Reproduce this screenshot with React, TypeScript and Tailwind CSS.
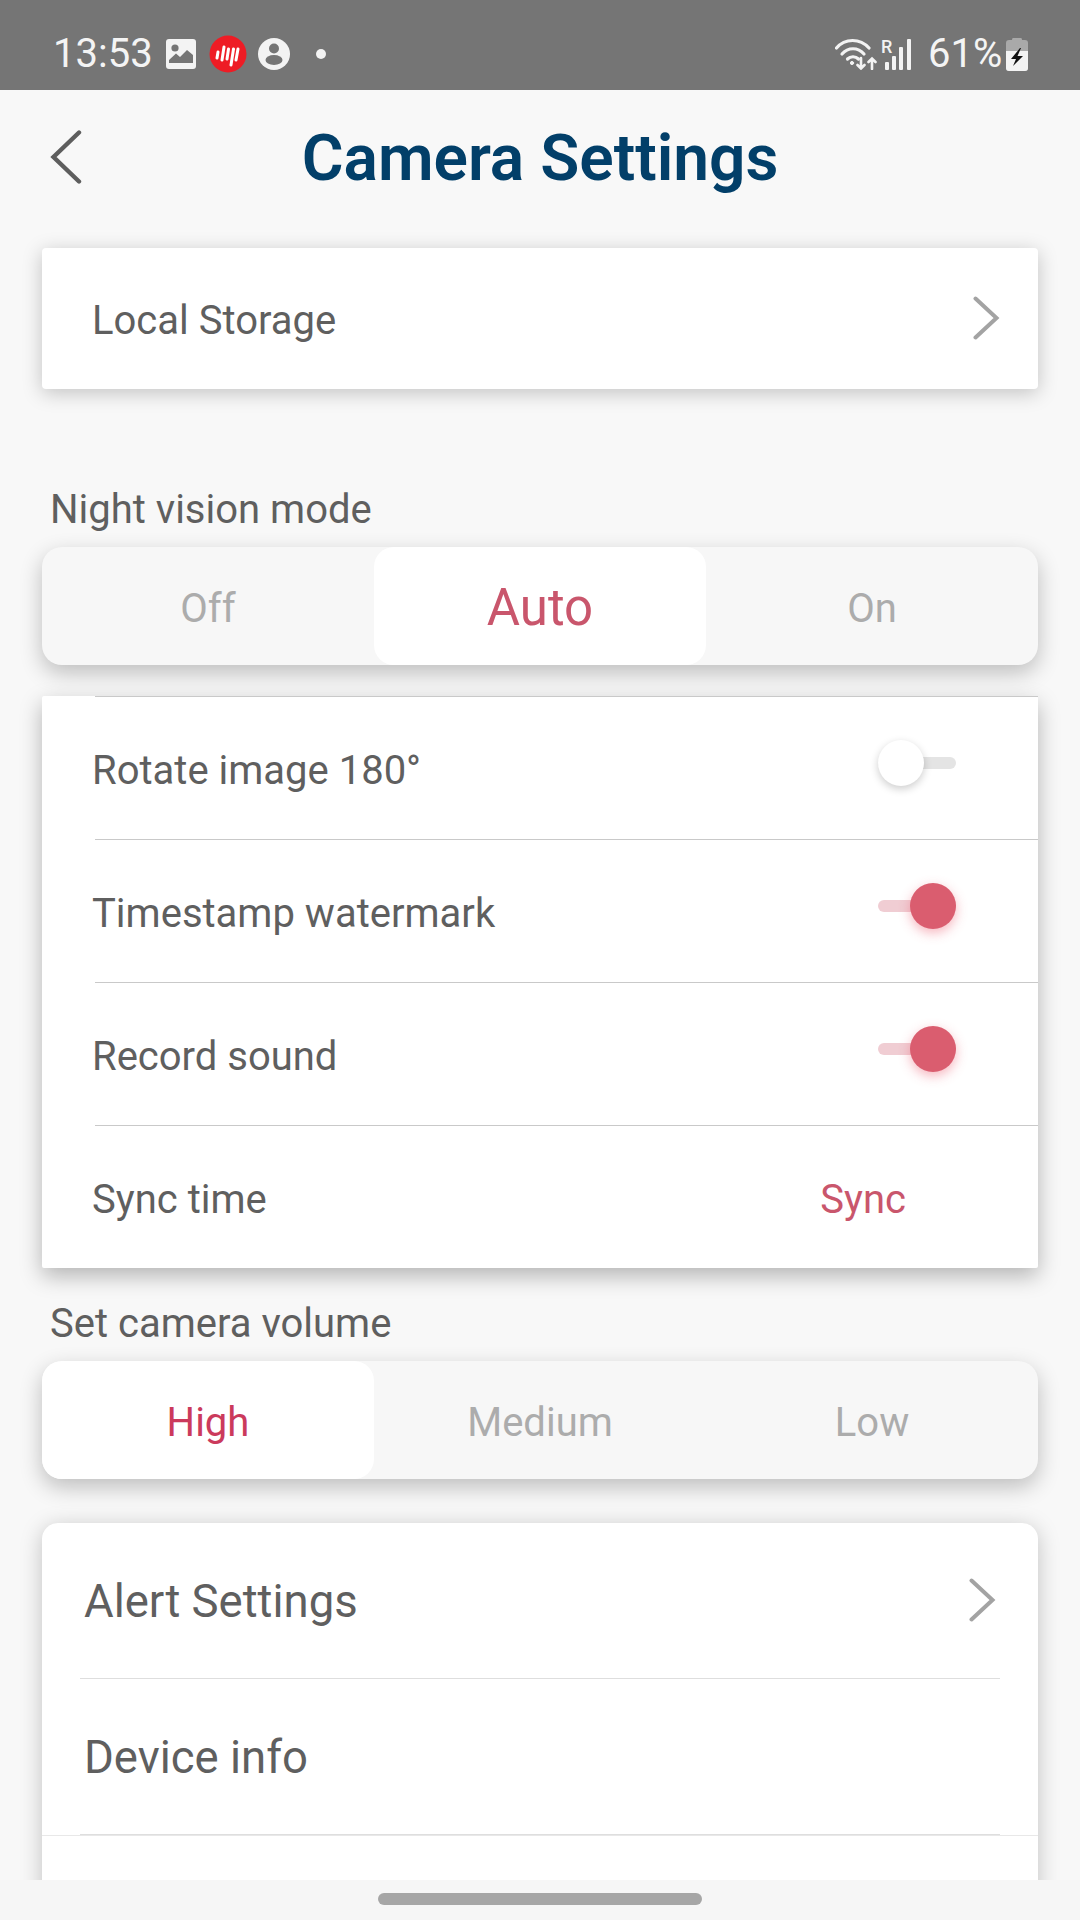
import React from "react";

const font = { fontFamily: "Roboto, sans-serif" };

function Chevron({ cls }: { cls: string }) {
  return (
    <svg className={cls} viewBox="0 0 27 44" fill="none">
      <path d="M2.5 2.5 L23.5 22 L2.5 41.5" stroke="#a3a3a3" strokeWidth="4" strokeLinecap="round" strokeLinejoin="miter" />
    </svg>
  );
}

function Toggle({ on }: { on: boolean }) {
  return (
    <div className="relative w-[78px] h-[46px] mt-[-10px]">
      <div className={`absolute left-0 top-[17px] w-[78px] h-[12px] rounded-full ${on ? "bg-[#f0cdd3]" : "bg-[#e4e4e4]"}`} />
      {on ? (
        <div className="absolute left-[32px] top-0 w-[46px] h-[46px] rounded-full bg-[#da5d6f] shadow-[0_4px_12px_rgba(235,90,110,0.45)]" />
      ) : (
        <div className="absolute left-0 top-0 w-[46px] h-[46px] rounded-full bg-white shadow-[0_3px_9px_rgba(0,0,0,0.2)]" />
      )}
    </div>
  );
}

function Segment({ items, active, activeCls }: { items: string[]; active: number; activeCls: string }) {
  return (
    <div className="mx-[42px] h-[118px] flex rounded-[20px] bg-[#f7f7f7] shadow-[0_8px_22px_rgba(0,0,0,0.24)]">
      {items.map((t, i) => (
        <div
          key={t}
          className={`flex-1 flex items-center justify-center rounded-[20px] pt-[5px] ${i === active ? "bg-white " + activeCls : "text-[40px] text-[#acacac]"}`}
        >
          {t}
        </div>
      ))}
    </div>
  );
}

function Divider() {
  return <div className="ml-[53px] h-px bg-[#c9c9c9]" />;
}

function Row({ label, children }: { label: string; children: React.ReactNode }) {
  return (
    <div className="h-[142px] flex items-center justify-between pl-[50px] text-[40px] text-[#5f5f5f]">
      <span className="pt-[5px]">{label}</span>
      {children}
    </div>
  );
}

export default function App() {
  return (
    <div className="w-[1080px] h-[1920px] flex flex-col overflow-hidden bg-[#f8f8f8]" style={font}>
      {/* status bar */}
      <div className="h-[90px] shrink-0 bg-[#757575] flex items-center pl-[53px] pr-[52px] pt-[18px] text-[#f4f4f4]">
        <span className="text-[40px] font-normal w-[113px]">13:53</span>
        <svg className="w-[30px] h-[30px]" viewBox="0 0 30 30">
          <rect width="30" height="30" rx="3" fill="#f3f3f3" />
          <circle cx="9" cy="9" r="3.6" fill="#757575" />
          <path d="M3 24 L3 21 L10 14.5 L14 18 L21 11 L27 16 L27 24 Z" fill="#757575" />
        </svg>
        <svg className="ml-[13px] w-[38px] h-[38px]" viewBox="0 0 38 38">
          <circle cx="19" cy="19" r="18.5" fill="#ee1c25" />
          <g stroke="#fff" strokeWidth="3" strokeLinecap="round">
            <path d="M8 23 L9 17" />
            <path d="M13 25 L15 12" />
            <path d="M18 24 L19.5 14" />
            <path d="M22 30 L24.5 14" />
            <path d="M27 25 L29 14" />
          </g>
        </svg>
        <svg className="ml-[11px] w-[32px] h-[32px]" viewBox="0 0 32 32">
          <circle cx="16" cy="16" r="16" fill="#f3f3f3" />
          <circle cx="16" cy="10.5" r="5" fill="#757575" />
          <ellipse cx="16" cy="22" rx="8.5" ry="5" fill="#757575" />
        </svg>
        <div className="ml-[26px] w-[10px] h-[10px] rounded-full bg-[#f3f3f3]" />
        <div className="flex-1" />
        <svg className="w-[42px] h-[32px]" viewBox="0 0 42 32" fill="none" stroke="#f3f3f3" strokeWidth="3.2" strokeLinecap="round">
          <path d="M1.5 10 C10 0 25 0 34 10" />
          <path d="M7 16 C13 9 23 9 29 16" />
          <path d="M12.5 21 C15.5 18 20.5 18 23.5 21" />
          <circle cx="17" cy="25" r="1.6" fill="#f3f3f3" strokeWidth="1" />
          <path d="M26 20 V30 M22.5 27 L26 30.5 L29.5 27" strokeWidth="2.6" />
          <path d="M37 31 V21 M33.5 24 L37 20.5 L40.5 24" strokeWidth="2.6" />
        </svg>
        <svg className="ml-[4px] mt-[-6px] w-[32px] h-[38px]" viewBox="0 -6 32 38">
          <text x="0" y="15" fontSize="18" fontWeight="500" fill="#f3f3f3" fontFamily="Roboto, sans-serif">R</text>
          <rect x="4" y="24" width="4" height="8" rx="1" fill="#f3f3f3" />
          <rect x="11" y="18" width="4" height="14" rx="1" fill="#f3f3f3" />
          <rect x="18" y="9" width="4" height="23" rx="1" fill="#f3f3f3" />
          <rect x="26" y="1" width="4" height="31" rx="1" fill="#f3f3f3" />
        </svg>
        <span className="ml-[15px] text-[40px] font-normal w-[72px]">61%</span>
        <svg className="ml-[6px] w-[22px] h-[33px]" viewBox="0 0 22 33">
          <path d="M7 0 H15 Q16 0 16 2 H19 Q22 2 22 5 V30 Q22 33 19 33 H3 Q0 33 0 30 V5 Q0 2 3 2 H6 Q6 0 7 0 Z" fill="#a9a9a9" />
          <path d="M0 13 H22 V30 Q22 33 19 33 H3 Q0 33 0 30 Z" fill="#f3f3f3" />
          <path d="M14 10 L5 21 H10 L7 28 L17 18 H11.5 L15 10 Z" fill="#111" />
        </svg>
      </div>

      {/* content */}
      <div className="flex-1 overflow-hidden">
        <div className="relative h-[134px] flex items-center justify-center">
          <svg className="absolute left-[50px] top-[40px] w-[32px] h-[54px]" viewBox="0 0 32 54" fill="none">
            <path d="M29 2.5 L3.5 27 L29 51.5" stroke="#5e5e5e" strokeWidth="4.4" strokeLinecap="round" />
          </svg>
          <h1 className="pt-[3px] text-[64px] font-semibold text-[#023f69]">Camera Settings</h1>
        </div>

        <div className="mt-[24px] mx-[42px] h-[141px] bg-white rounded-[4px] shadow-[0_4px_20px_rgba(0,0,0,0.22)] flex items-center justify-between pl-[50px] pr-[38px] text-[40px] text-[#5f5f5f]">
          <span className="pt-[5px]">Local Storage</span>
          <Chevron cls="w-[27px] h-[44px] mt-[-2px]" />
        </div>

        <div className="mt-[97px] pt-[2px] pl-[50px] h-[44px] leading-[44px] text-[40px] text-[#5f5f5f]">Night vision mode</div>
        <div className="mt-[17px]">
          <Segment items={["Off", "Auto", "On"]} active={1} activeCls="text-[51px] text-[#c9566c]" />
        </div>

        <div className="mt-[31px] mx-[42px] bg-white rounded-[2px] shadow-[0_8px_22px_rgba(0,0,0,0.28)]">
          <Divider />
          <Row label="Rotate image 180°">
            <div className="mr-[82px]"><Toggle on={false} /></div>
          </Row>
          <Divider />
          <Row label="Timestamp watermark">
            <div className="mr-[82px]"><Toggle on /></div>
          </Row>
          <Divider />
          <Row label="Record sound">
            <div className="mr-[82px]"><Toggle on /></div>
          </Row>
          <Divider />
          <Row label="Sync time">
            <span className="mr-[132px] pt-[5px] text-[#c9566c]">Sync</span>
          </Row>
        </div>

        <div className="mt-[33px] pt-[1px] pl-[50px] h-[44px] leading-[44px] text-[40px] text-[#5f5f5f]">Set camera volume</div>
        <div className="mt-[16px]">
          <Segment items={["High", "Medium", "Low"]} active={0} activeCls="text-[40px] text-[#cb3a5c]" />
        </div>

        <div className="mt-[44px] mx-[42px] h-[420px] bg-white rounded-t-[16px] shadow-[0_4px_22px_rgba(0,0,0,0.22)]">
          <div className="h-[155px] flex items-center justify-between pl-[42px] pr-[42px] text-[45.5px] text-[#5f5f5f]">
            <span className="pt-[3px]">Alert Settings</span>
            <Chevron cls="w-[27px] h-[44px] mt-[-2px]" />
          </div>
          <div className="mx-[38px] h-px bg-[#dedede]" />
          <div className="h-[155px] pt-[3px] flex items-center pl-[42px] text-[45.5px] text-[#5f5f5f]">Device info</div>
          <div className="mx-[38px] h-px bg-[#dedede]" />
          <div className="h-px bg-[#e8e8e8]" />
        </div>
      </div>

      {/* nav bar */}
      <div className="h-[40px] shrink-0 bg-[#f6f6f6] flex justify-center pt-[13px]">
        <div className="w-[324px] h-[12px] rounded-full bg-[#a6a6a6]" />
      </div>
    </div>
  );
}
